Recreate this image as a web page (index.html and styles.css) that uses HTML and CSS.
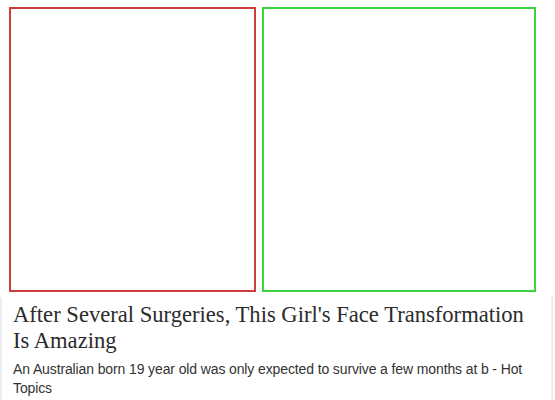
FILE: index.html
```html
<!DOCTYPE html>
<html>
<head>
<meta charset="utf-8">
<link rel="stylesheet" href="styles.css">
</head>
<body>
<div class="slots">
  <div class="slot slot-red"></div>
  <div class="slot slot-green"></div>
</div>
<div class="card">
  <h1 class="title">After Several Surgeries, This Girl's Face Transformation Is Amazing</h1>
  <p class="desc">An Australian born 19 year old was only expected to survive a few months at b - Hot Topics</p>
</div>
</body>
</html>
```
FILE: styles.css
```css
html, body {
  margin: 0;
  padding: 0;
  background: #fff;
}
.slots {
  display: flex;
  gap: 6px;
  padding: 7px 0 0 9px;
}
.slot {
  box-sizing: border-box;
  height: 285px;
  border: 2px solid;
}
.slot-red {
  width: 247px;
  border-color: #cc3e3e;
}
.slot-green {
  width: 274px;
  border-color: #3fd23f;
}
.card {
  box-sizing: border-box;
  width: 553px;
  margin-top: 5px;
  border-left: 2px solid #eeeeee;
  border-right: 2px solid #eeeeee;
  padding: 5px 20px 10px 11px;
}
.title {
  margin: 0;
  font-family: "Liberation Serif", "Times New Roman", serif;
  font-weight: normal;
  font-size: 22.6px;
  line-height: 26px;
  color: #2b2b2b;
}
.desc {
  margin: 6px 0 0;
  font-family: "Liberation Sans", Arial, sans-serif;
  font-size: 14px;
  letter-spacing: -0.12px;
  line-height: 19px;
  color: #333;
}
```
